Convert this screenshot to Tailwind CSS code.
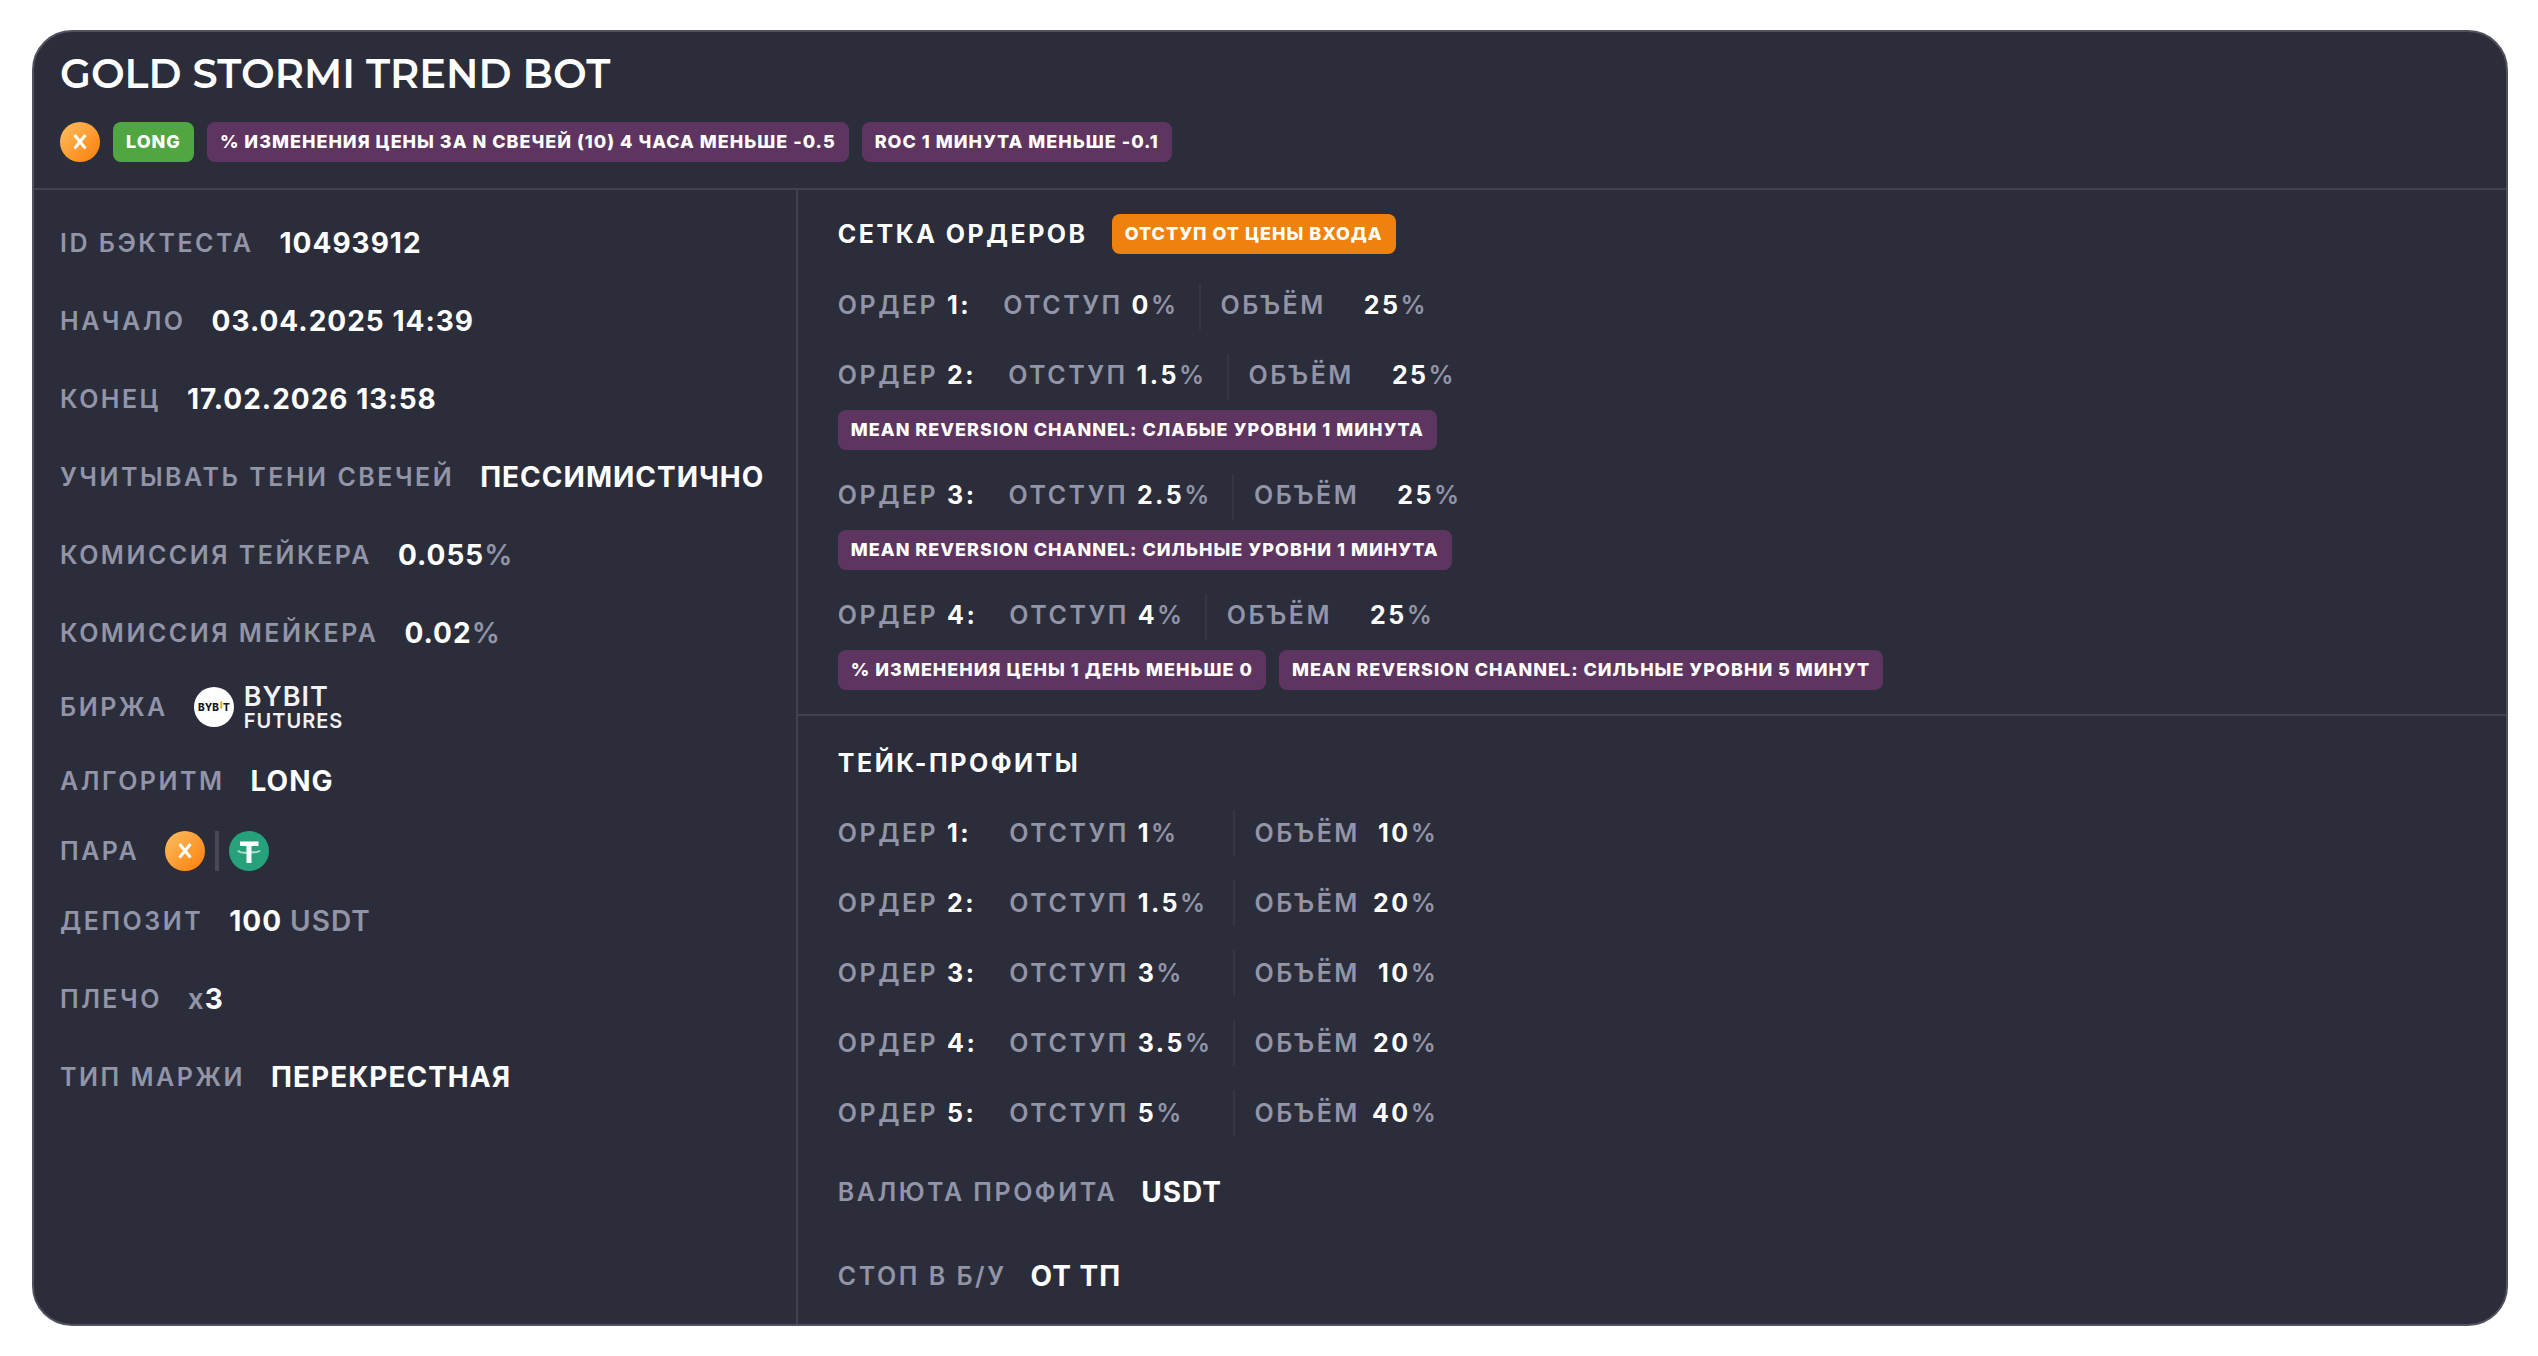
<!DOCTYPE html>
<html lang="ru">
<head>
    <meta charset="UTF-8">
    <meta name="viewport" content="width=device-width, initial-scale=1.0">
    <title>Gold Stormi Trend Bot</title>
    <script src="https://cdn.jsdelivr.net/npm/@tailwindcss/browser@4"></script>
</head>
<body class="bg-white font-['Inter','Liberation_Sans',sans-serif] text-[25px] leading-8 font-semibold text-[#9294a8]">
    <!-- coin icons -->
    <svg class="absolute size-0" aria-hidden="true">
        <defs>
            <linearGradient id="coinFill" x1="0" y1="0" x2="1" y2="1">
                <stop offset="0.1" stop-color="#fdb95a"/>
                <stop offset="0.9" stop-color="#fd8410"/>
            </linearGradient>
        </defs>
        <symbol id="coin-x" viewBox="0 0 40 40">
            <circle cx="20" cy="20" r="20" fill="url(#coinFill)"/>
            <path d="M14.5 13L25.5 26.5M25.5 13L14.5 26.5" stroke="#fff" stroke-width="3" fill="none"/>
        </symbol>
        <symbol id="coin-usdt" viewBox="0 0 40 40">
            <circle cx="20" cy="20" r="20" fill="#26a17b"/>
            <path d="M11 10.5H29.5V15H22.5V32H17.5V15H11Z" fill="#fff"/>
            <path d="M9 19.5C11 22 16 22 20 21.5S29 22 31 19.5" stroke="#fff" stroke-opacity="0.65" stroke-width="2" fill="none"/>
        </symbol>
    </svg>

    <main class="mx-[30px] mt-[30px] mb-[31px] ml-8 overflow-hidden rounded-[40px] border-2 border-[#50535d] bg-[#2b2d3a]">
        <header class="border-b-2 border-[#40424f] px-[26px] pt-[18px] pb-[26px]">
            <h1 class="font-['Montserrat','Inter',sans-serif] text-[40px] leading-[48px] font-semibold text-white">GOLD STORMI TREND BOT</h1>
            <div class="mt-6 flex flex-wrap items-center gap-[13px] text-[18px] font-extrabold tracking-[1px] text-white">
                <svg class="size-10" role="img" aria-label="X"><use href="#coin-x"/></svg>
                <span class="flex h-10 items-center rounded-lg bg-[#50a640] px-[13px]">LONG</span>
                <span class="flex h-10 items-center rounded-lg bg-[#5e3560] px-[13px]">% ИЗМЕНЕНИЯ ЦЕНЫ ЗА N СВЕЧЕЙ (10) 4 ЧАСА МЕНЬШЕ -0.5</span>
                <span class="flex h-10 items-center rounded-lg bg-[#5e3560] px-[13px]">ROC 1 МИНУТА МЕНЬШЕ -0.1</span>
            </div>
        </header>

        <div class="flex">
            <!-- Параметры -->
            <dl class="flex w-[30.9%] shrink-0 flex-col gap-[22px] border-r-2 border-[#40424f] px-[26px] pt-[25px] pb-6 tracking-widest">
                <div class="flex h-14 items-center gap-[26px]">
                    <dt>ID БЭКТЕСТА</dt>
                    <dd class="text-[28px] font-bold tracking-[1px] text-white">10493912</dd>
                </div>
                <div class="flex h-14 items-center gap-[26px]">
                    <dt>НАЧАЛО</dt>
                    <dd class="text-[28px] font-bold tracking-[1px] text-white">03.04.2025 14:39</dd>
                </div>
                <div class="flex h-14 items-center gap-[26px]">
                    <dt>КОНЕЦ</dt>
                    <dd class="text-[28px] font-bold tracking-[1px] text-white">17.02.2026 13:58</dd>
                </div>
                <div class="flex h-14 items-center gap-[26px]">
                    <dt>УЧИТЫВАТЬ ТЕНИ СВЕЧЕЙ</dt>
                    <dd class="text-[28px] font-bold tracking-[1px] text-white">ПЕССИМИСТИЧНО</dd>
                </div>
                <div class="flex h-14 items-center gap-[26px]">
                    <dt>КОМИССИЯ ТЕЙКЕРА</dt>
                    <dd class="text-[28px] tracking-[1px]"><span class="font-bold text-white">0.055</span>%</dd>
                </div>
                <div class="flex h-14 items-center gap-[26px]">
                    <dt>КОМИССИЯ МЕЙКЕРА</dt>
                    <dd class="text-[28px] tracking-[1px]"><span class="font-bold text-white">0.02</span>%</dd>
                </div>
                <div class="flex h-12 items-center gap-[26px]">
                    <dt>БИРЖА</dt>
                    <dd class="flex items-center gap-[10px] tracking-[1px] text-[#f1f1f6]">
                        <svg class="size-10" viewBox="0 0 40 40" aria-hidden="true">
                            <circle cx="20" cy="20" r="20" fill="#fff"/>
                            <text x="4" y="24" font-family="Inter" font-size="10" font-weight="800" letter-spacing="0" fill="#15192a">BYB</text>
                            <path d="M27.3 14.5V21.5" stroke="#f7a600" stroke-width="2"/>
                            <text x="29" y="24" font-family="Inter" font-size="10" font-weight="800" letter-spacing="0" fill="#15192a">T</text>
                        </svg>
                        <span class="flex flex-col">
                            <span class="text-[27px] leading-7">BYBIT</span>
                            <span class="text-[20px] leading-5">FUTURES</span>
                        </span>
                    </dd>
                </div>
                <div class="flex h-14 items-center gap-[26px]">
                    <dt>АЛГОРИТМ</dt>
                    <dd class="text-[28px] font-bold tracking-[1px] text-white">LONG</dd>
                </div>
                <div class="flex h-10 items-center gap-[26px]">
                    <dt>ПАРА</dt>
                    <dd class="flex items-center gap-[10px]">
                        <svg class="size-10" role="img" aria-label="X"><use href="#coin-x"/></svg>
                        <span class="h-10 w-1 bg-[#474957]"></span>
                        <svg class="size-10" role="img" aria-label="USDT"><use href="#coin-usdt"/></svg>
                    </dd>
                </div>
                <div class="flex h-14 items-center gap-[26px]">
                    <dt>ДЕПОЗИТ</dt>
                    <dd class="text-[28px] tracking-[1px]"><span class="font-bold text-white">100</span> USDT</dd>
                </div>
                <div class="flex h-14 items-center gap-[26px]">
                    <dt>ПЛЕЧО</dt>
                    <dd class="text-[28px] tracking-[1px]">x<span class="font-bold text-white">3</span></dd>
                </div>
                <div class="flex h-14 items-center gap-[26px]">
                    <dt>ТИП МАРЖИ</dt>
                    <dd class="text-[28px] font-bold tracking-[1px] text-white">ПЕРЕКРЕСТНАЯ</dd>
                </div>
            </dl>

            <div class="grow tracking-widest">
                <!-- Сетка ордеров -->
                <section class="border-b-2 border-[#40424f] py-6 pl-10">
                    <div class="flex items-center gap-6">
                        <h2 class="font-bold text-white">СЕТКА ОРДЕРОВ</h2>
                        <span class="flex h-10 items-center rounded-lg bg-[#ef820f] px-[13px] text-[18px] font-extrabold tracking-[1px] text-white">ОТСТУП ОТ ЦЕНЫ ВХОДА</span>
                    </div>
                    <ul class="mt-[30px] flex flex-col gap-6">
                        <li>
                            <div class="flex h-[46px] items-start leading-[43px]">
                                <span class="mr-8">ОРДЕР <b class="font-bold text-white">1:</b></span>
                                <span>ОТСТУП <b class="font-bold text-white">0</b>%</span>
                                <span class="mx-5 h-full w-[2px] bg-[#343644]"></span>
                                <span class="mr-[38px]">ОБЪЁМ</span>
                                <span><b class="font-bold text-white">25</b>%</span>
                            </div>
                        </li>
                        <li>
                            <div class="flex h-[46px] items-start leading-[43px]">
                                <span class="mr-8">ОРДЕР <b class="font-bold text-white">2:</b></span>
                                <span>ОТСТУП <b class="font-bold text-white">1.5</b>%</span>
                                <span class="mx-5 h-full w-[2px] bg-[#343644]"></span>
                                <span class="mr-[38px]">ОБЪЁМ</span>
                                <span><b class="font-bold text-white">25</b>%</span>
                            </div>
                            <div class="mt-[10px] flex flex-wrap gap-[13px] text-[18px] font-extrabold tracking-[1px] text-white">
                                <span class="flex h-10 items-center rounded-lg bg-[#5e3560] px-[13px]">MEAN REVERSION CHANNEL: СЛАБЫЕ УРОВНИ 1 МИНУТА</span>
                            </div>
                        </li>
                        <li>
                            <div class="flex h-[46px] items-start leading-[43px]">
                                <span class="mr-8">ОРДЕР <b class="font-bold text-white">3:</b></span>
                                <span>ОТСТУП <b class="font-bold text-white">2.5</b>%</span>
                                <span class="mx-5 h-full w-[2px] bg-[#343644]"></span>
                                <span class="mr-[38px]">ОБЪЁМ</span>
                                <span><b class="font-bold text-white">25</b>%</span>
                            </div>
                            <div class="mt-[10px] flex flex-wrap gap-[13px] text-[18px] font-extrabold tracking-[1px] text-white">
                                <span class="flex h-10 items-center rounded-lg bg-[#5e3560] px-[13px]">MEAN REVERSION CHANNEL: СИЛЬНЫЕ УРОВНИ 1 МИНУТА</span>
                            </div>
                        </li>
                        <li>
                            <div class="flex h-[46px] items-start leading-[43px]">
                                <span class="mr-8">ОРДЕР <b class="font-bold text-white">4:</b></span>
                                <span>ОТСТУП <b class="font-bold text-white">4</b>%</span>
                                <span class="mx-5 h-full w-[2px] bg-[#343644]"></span>
                                <span class="mr-[38px]">ОБЪЁМ</span>
                                <span><b class="font-bold text-white">25</b>%</span>
                            </div>
                            <div class="mt-[10px] flex flex-wrap gap-[13px] text-[18px] font-extrabold tracking-[1px] text-white">
                                <span class="flex h-10 items-center rounded-lg bg-[#5e3560] px-[13px]">% ИЗМЕНЕНИЯ ЦЕНЫ 1 ДЕНЬ МЕНЬШЕ 0</span>
                                <span class="flex h-10 items-center rounded-lg bg-[#5e3560] px-[13px]">MEAN REVERSION CHANNEL: СИЛЬНЫЕ УРОВНИ 5 МИНУТ</span>
                            </div>
                        </li>
                    </ul>
                </section>

                <!-- Тейк-профиты -->
                <section class="pt-6 pb-5 pl-10">
                    <h2 class="leading-[46px] font-bold text-white">ТЕЙК-ПРОФИТЫ</h2>
                    <table class="border-separate border-spacing-x-0 border-spacing-y-6">
                        <tbody>
                            <tr class="h-[46px]">
                                <th class="pr-8 text-left font-semibold">ОРДЕР <b class="font-bold text-white">1:</b></th>
                                <td class="pr-5">ОТСТУП <b class="font-bold text-white">1</b>%</td>
                                <td class="border-l-2 border-[#343644] pl-5">ОБЪЁМ</td>
                                <td class="pl-3 text-right"><b class="font-bold text-white">10</b>%</td>
                            </tr>
                            <tr class="h-[46px]">
                                <th class="pr-8 text-left font-semibold">ОРДЕР <b class="font-bold text-white">2:</b></th>
                                <td class="pr-5">ОТСТУП <b class="font-bold text-white">1.5</b>%</td>
                                <td class="border-l-2 border-[#343644] pl-5">ОБЪЁМ</td>
                                <td class="pl-3 text-right"><b class="font-bold text-white">20</b>%</td>
                            </tr>
                            <tr class="h-[46px]">
                                <th class="pr-8 text-left font-semibold">ОРДЕР <b class="font-bold text-white">3:</b></th>
                                <td class="pr-5">ОТСТУП <b class="font-bold text-white">3</b>%</td>
                                <td class="border-l-2 border-[#343644] pl-5">ОБЪЁМ</td>
                                <td class="pl-3 text-right"><b class="font-bold text-white">10</b>%</td>
                            </tr>
                            <tr class="h-[46px]">
                                <th class="pr-8 text-left font-semibold">ОРДЕР <b class="font-bold text-white">4:</b></th>
                                <td class="pr-5">ОТСТУП <b class="font-bold text-white">3.5</b>%</td>
                                <td class="border-l-2 border-[#343644] pl-5">ОБЪЁМ</td>
                                <td class="pl-3 text-right"><b class="font-bold text-white">20</b>%</td>
                            </tr>
                            <tr class="h-[46px]">
                                <th class="pr-8 text-left font-semibold">ОРДЕР <b class="font-bold text-white">5:</b></th>
                                <td class="pr-5">ОТСТУП <b class="font-bold text-white">5</b>%</td>
                                <td class="border-l-2 border-[#343644] pl-5">ОБЪЁМ</td>
                                <td class="pl-3 text-right"><b class="font-bold text-white">40</b>%</td>
                            </tr>
                        </tbody>
                    </table>
                    <dl class="mt-1 flex flex-col gap-7">
                        <div class="flex h-14 items-center gap-6">
                            <dt>ВАЛЮТА ПРОФИТА</dt>
                            <dd class="text-[28px] font-bold tracking-[1px] text-white">USDT</dd>
                        </div>
                        <div class="flex h-14 items-center gap-6">
                            <dt>СТОП В Б/У</dt>
                            <dd class="text-[28px] font-bold tracking-[1px] text-white">ОТ ТП</dd>
                        </div>
                    </dl>
                </section>
            </div>
        </div>
    </main>
</body>
</html>
